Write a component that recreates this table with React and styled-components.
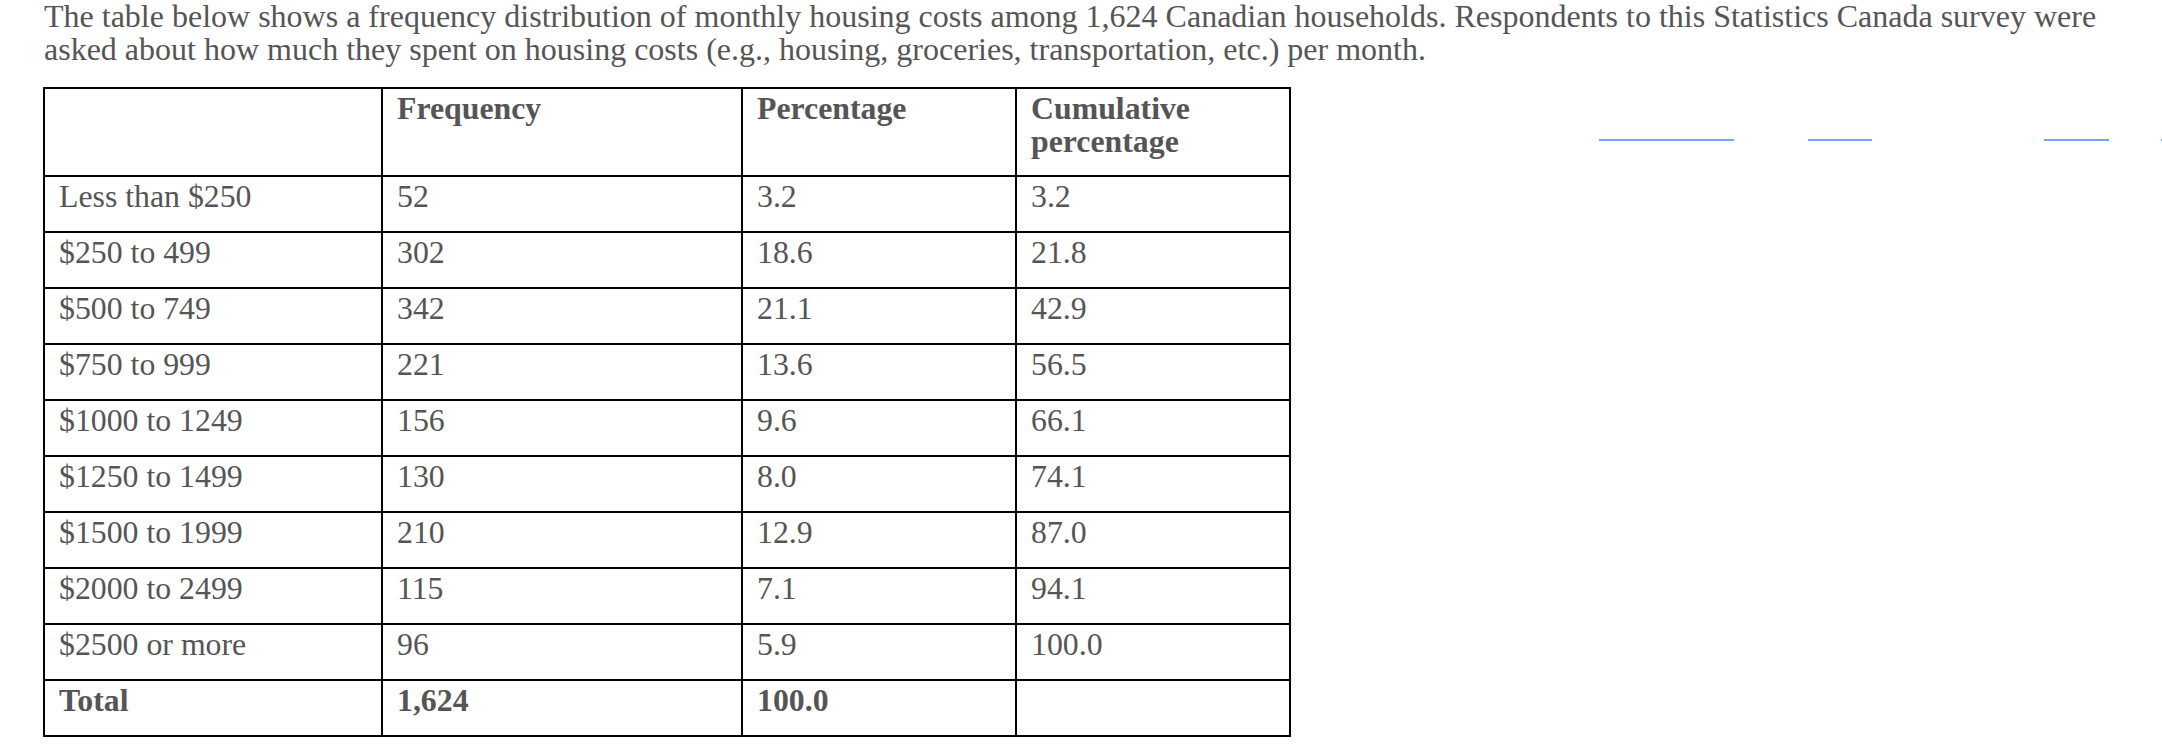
import React from 'react'
import styled, { createGlobalStyle } from 'styled-components'

const GlobalStyle = createGlobalStyle`
  html, body {
    margin: 0;
    padding: 0;
    background: #fff;
    overflow: hidden;
  }
  body {
    font-family: "Liberation Serif", "Times New Roman", serif;
    color: #555;
  }
`

const Page = styled.div`
  padding: 0 44px;
  width: 2162px;
  box-sizing: border-box;
`

const Intro = styled.p`
  margin: 0 0 21px 0;
  font-size: 32px;
  line-height: 33px;
`

const Row = styled.div`
  display: flex;
  align-items: flex-start;
  margin-left: -1px;
`

const Table = styled.table`
  border-collapse: collapse;
  table-layout: fixed;
  width: 1246px;
  flex-shrink: 0;
  font-size: 31.8px;
  line-height: 33px;
`

const Cell = styled.td`
  border: 2px solid #000;
  padding: 3px 14px 18px 14px;
  vertical-align: top;
  text-align: left;
  font-weight: ${p => (p.$bold ? 'bold' : 'normal')};
`

const HeadCell = styled.th`
  border: 2px solid #000;
  padding: 3px 14px 17px 14px;
  vertical-align: top;
  text-align: left;
  font-weight: bold;
`

const Blanks = styled.div`
  display: flex;
  flex-shrink: 0;
  margin-left: 308px;
  padding-top: 52px;
`

const Blank = styled.span`
  display: block;
  height: 2px;
  background: #6ea6f2;
  width: ${p => p.$w}px;
  margin-right: ${p => p.$gap}px;
`

const rows = [
  ['Less than $250', '52', '3.2', '3.2'],
  ['$250 to 499', '302', '18.6', '21.8'],
  ['$500 to 749', '342', '21.1', '42.9'],
  ['$750 to 999', '221', '13.6', '56.5'],
  ['$1000 to 1249', '156', '9.6', '66.1'],
  ['$1250 to 1499', '130', '8.0', '74.1'],
  ['$1500 to 1999', '210', '12.9', '87.0'],
  ['$2000 to 2499', '115', '7.1', '94.1'],
  ['$2500 or more', '96', '5.9', '100.0'],
]

const blanks = [
  { w: 135, gap: 74 },
  { w: 64, gap: 172 },
  { w: 65, gap: 52 },
  { w: 20, gap: 0 },
]

export default function App() {
  return (
    <Page>
      <GlobalStyle />
      <Intro>
        The table below shows a frequency distribution of monthly housing costs among 1,624 Canadian
        households. Respondents to this Statistics Canada survey were asked about how much they spent on
        housing costs (e.g., housing, groceries, transportation, etc.) per month.
      </Intro>
      <Row>
        <Table>
          <colgroup>
            <col style={{ width: 338 }} />
            <col style={{ width: 360 }} />
            <col style={{ width: 274 }} />
            <col style={{ width: 274 }} />
          </colgroup>
          <thead>
            <tr>
              <HeadCell></HeadCell>
              <HeadCell>Frequency</HeadCell>
              <HeadCell>Percentage</HeadCell>
              <HeadCell>Cumulative percentage</HeadCell>
            </tr>
          </thead>
          <tbody>
            {rows.map(r => (
              <tr key={r[0]}>
                {r.map((c, i) => (
                  <Cell key={i}>{c}</Cell>
                ))}
              </tr>
            ))}
            <tr>
              <Cell $bold>Total</Cell>
              <Cell $bold>1,624</Cell>
              <Cell $bold>100.0</Cell>
              <Cell></Cell>
            </tr>
          </tbody>
        </Table>
        <Blanks>
          {blanks.map((b, i) => (
            <Blank key={i} $w={b.w} $gap={b.gap} />
          ))}
        </Blanks>
      </Row>
    </Page>
  )
}
